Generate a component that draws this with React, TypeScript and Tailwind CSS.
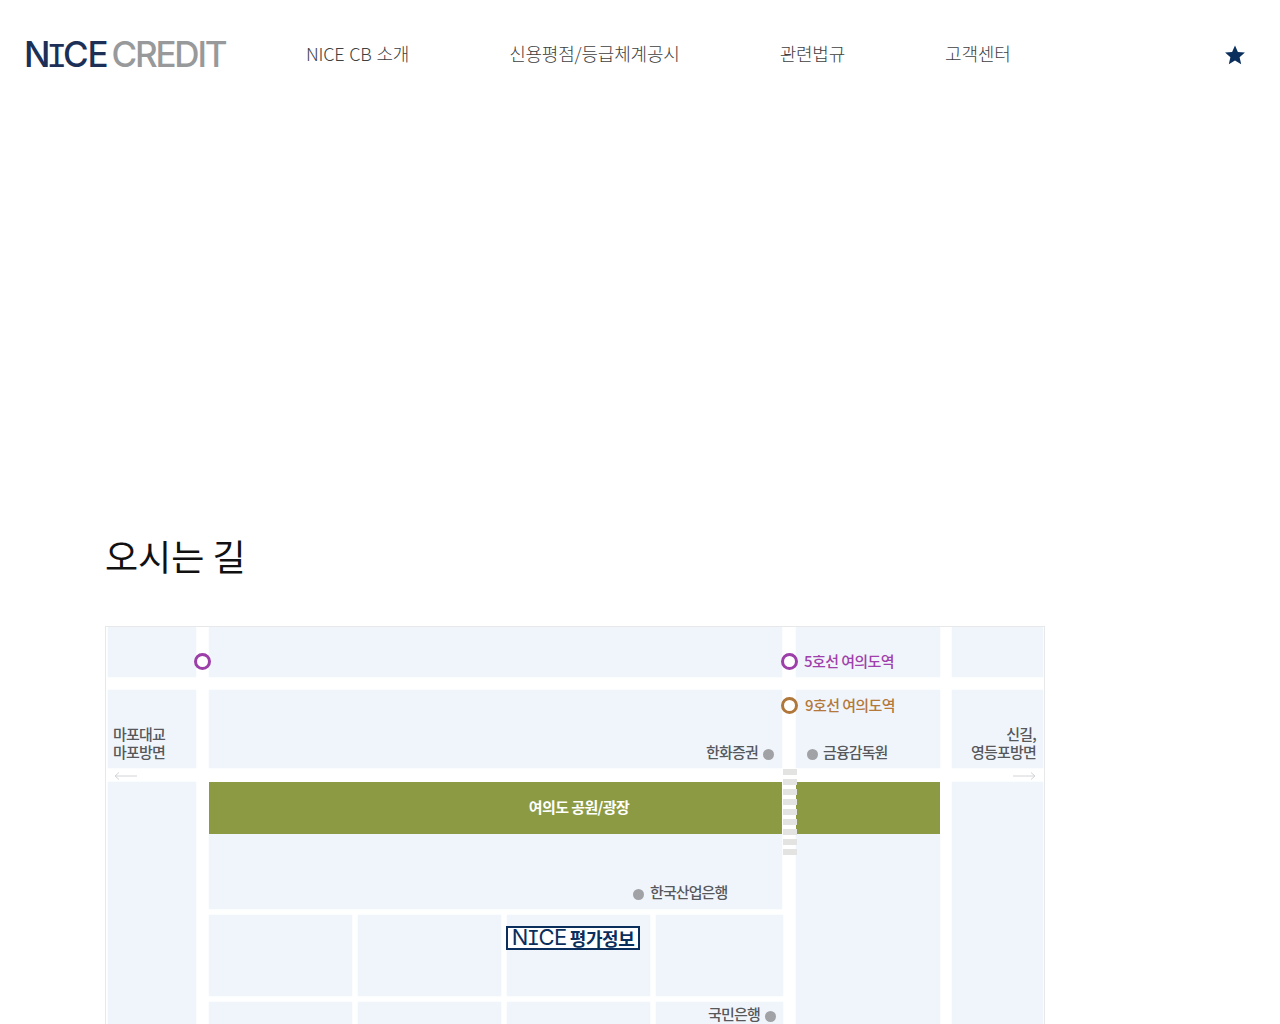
const KR = "font-['Noto_Sans_CJK_KR','Noto_Sans',sans-serif]";
const block = 'bg-[#f0f5fb] shadow-[0_0_2px_#f0f5fb]';
const slabI = "font-['Liberation_Mono',monospace]";

const navItems = ['NICE CB 소개', '신용평점/등급체계공시', '관련법규', '고객센터'];

// small city blocks below the park
const lowerRows = [0, 1];

function Ring({ className }: { className: string }) {
    return <span className={`absolute w-[17px] h-[17px] rounded-full border-[3px] bg-white ${className}`} />;
}

function Dot({ className }: { className: string }) {
    return <span className={`absolute w-[11px] h-[11px] rounded-full bg-[#a0a2a5] ${className}`} />;
}

function Label({ className, children }: { className: string; children: React.ReactNode }) {
    return (
        <span className={`absolute whitespace-nowrap text-[15px] leading-[18px] font-medium ${className}`}>
            {children}
        </span>
    );
}

function RoadMap() {
    return (
        <div className="relative w-[940px] h-[500px] border border-[#e6e8ea] bg-white pl-[2px] overflow-hidden">
            <div className="grid grid-cols-[88px_13px_573px_14px_144px_12px_91px] grid-rows-[50px_13px_78px_14px_1fr] h-full">
                <div className={`col-start-1 row-start-1 ${block}`} />
                <div className={`col-start-3 row-start-1 ${block}`} />
                <div className={`col-start-5 row-start-1 ${block}`} />
                <div className={`col-start-7 row-start-1 ${block}`} />

                <div className={`col-start-1 row-start-3 ${block}`} />
                <div className={`col-start-3 row-start-3 ${block}`} />
                <div className={`col-start-5 row-start-3 ${block}`} />
                <div className={`col-start-7 row-start-3 ${block}`} />

                <div className={`col-start-1 row-start-5 ${block}`} />
                <div className="col-start-3 row-start-5 flex flex-col">
                    <div className="relative z-10 h-[52px] bg-[#8c9b43] flex items-center justify-center pl-[167px] pb-[2px]">
                        <span className="text-white text-[15px] font-bold tracking-[-0.6px]">여의도 공원/광장</span>
                    </div>
                    <div className={`h-[75px] ${block}`} />
                    {lowerRows.map((row) => (
                        <div key={row} className="grid grid-cols-[143px_143px_143px_127px] gap-x-[6px] h-[81px] mt-[6px]">
                            <div className={block} />
                            <div className={block} />
                            <div className={block} />
                            <div className={block} />
                        </div>
                    ))}
                </div>
                <div className="col-start-5 row-start-5 flex flex-col">
                    <div className="relative z-10 h-[52px] bg-[#8c9b43]" />
                    <div className={`flex-1 ${block}`} />
                </div>
                <div className={`col-start-7 row-start-5 ${block}`} />
            </div>

            {/* crosswalk */}
            <div className="absolute z-20 left-[677px] top-[142px] w-[14px] h-[90px] flex flex-col gap-[4px]">
                {Array.from({ length: 9 }).map((_, i) => (
                    <span key={i} className="h-[6px] bg-[#e3e3e1]" />
                ))}
            </div>

            <Ring className="left-[88px] top-[26px] border-[#9c3fa8]" />
            <Ring className="left-[675px] top-[26px] border-[#9c3fa8]" />
            <Ring className="left-[675px] top-[70px] border-[#b0773a]" />

            <Label className="left-[698px] top-[25px] text-[#a040ac] tracking-[-0.6px]">5호선 여의도역</Label>
            <Label className="left-[699px] top-[69px] text-[#b4783a] tracking-[-0.6px]">9호선 여의도역</Label>

            <Label className="left-[7px] top-[98px] text-[#56585b] tracking-[-0.8px]">
                마포대교<br />마포방면
            </Label>
            <Label className="right-[8px] top-[98px] text-right text-[#56585b] tracking-[-0.8px]">
                신길,<br />영등포방면
            </Label>

            <Label className="left-[600px] top-[116px] text-[#56585b] tracking-[-0.8px]">한화증권</Label>
            <Dot className="left-[657px] top-[122px]" />
            <Dot className="left-[701px] top-[122px]" />
            <Label className="left-[717px] top-[116px] text-[#56585b] tracking-[-0.9px]">금융감독원</Label>

            <Dot className="left-[527px] top-[262px]" />
            <Label className="left-[544px] top-[256px] text-[#56585b] tracking-[-0.9px]">한국산업은행</Label>
            <Label className="left-[602px] top-[378px] text-[#56585b] tracking-[-0.8px]">국민은행</Label>
            <Dot className="left-[659px] top-[384px]" />

            <div className="absolute left-[400px] top-[299px] w-[134px] h-[24px] bg-white border-2 border-[#0b2f5c] flex items-center justify-center gap-[3px] text-[#0b2f5c]">
                <span className="font-['Inter',sans-serif] text-[22px] leading-none tracking-[-0.5px]">
                    N<span className={`${slabI} mx-[-1px]`}>I</span>CE
                </span>
                <span className="text-[18px] leading-none font-semibold tracking-[-0.4px]">평가정보</span>
            </div>

            {/* direction arrows */}
            <svg className="absolute left-[7px] top-[144px]" width="24" height="10" viewBox="0 0 24 10" fill="none" stroke="#d2d4d6">
                <path d="M24 5H2M6 1.5 2 5l4 3.5" />
            </svg>
            <svg className="absolute left-[907px] top-[144px]" width="24" height="10" viewBox="0 0 24 10" fill="none" stroke="#d2d4d6">
                <path d="M0 5h22M18 1.5 22 5l-4 3.5" />
            </svg>
        </div>
    );
}

export default function App() {
    return (
        <div className={`h-screen overflow-hidden bg-white ${KR}`}>
            <header className="flex items-center h-[110px] pl-[24px] pr-[35px]">
                <div className="font-['Inter',sans-serif] text-[35px] leading-none w-[202px] mt-[2px] whitespace-nowrap flex gap-[4px]">
                    <span className="text-[#1c2f57] font-medium tracking-[-1.2px]">
                        N<span className={`${slabI} font-normal mx-[-3px]`}>I</span>CE
                    </span>
                    <span className="text-[#98999b] font-medium tracking-[-2.2px]">CREDIT</span>
                </div>
                <nav className="flex gap-[100px] ml-[80px] mb-[4px]">
                    {navItems.map((item) => (
                        <a key={item} className="text-[18px] leading-[26px] font-light tracking-[-0.2px] [word-spacing:1px] text-[#404040] whitespace-nowrap">
                            {item}
                        </a>
                    ))}
                </nav>
                <svg className="ml-auto" width="20" height="20" viewBox="0 0 20 20" fill="#0b2f5c">
                    <polygon points="10,0.5 12.9,7 19.9,7.6 14.6,12.3 16.2,19.2 10,15.6 3.8,19.2 5.4,12.3 0.1,7.6 7.1,7" />
                </svg>
            </header>

            <main className="pl-[105px] pt-[423px]">
                <h2 className="text-[36px] leading-[44px] font-normal text-[#111]">오시는 길</h2>
                <div className="mt-[49px]">
                    <RoadMap />
                </div>
            </main>
        </div>
    );
}
